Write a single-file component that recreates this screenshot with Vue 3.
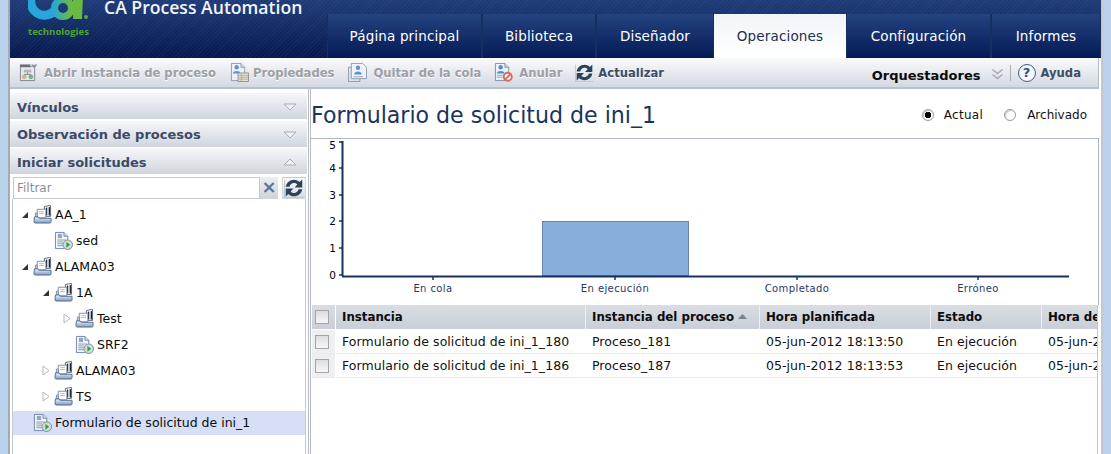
<script setup>
const tabs = [
  { label: 'Página principal', w: 155 },
  { label: 'Biblioteca', w: 114 },
  { label: 'Diseñador', w: 118 },
  { label: 'Operaciones', w: 132, active: true },
  { label: 'Configuración', w: 145 },
  { label: 'Informes', w: 110 },
]
const tools = [
  { label: 'Abrir instancia de proceso', icon: 'i-open', gap: 14, inner: 6 },
  { label: 'Propiedades', icon: 'i-prop', gap: 14, inner: 4 },
  { label: 'Quitar de la cola', icon: 'i-queue', gap: 13, inner: 6 },
  { label: 'Anular', icon: 'i-cancel', gap: 13, inner: 6 },
  { label: 'Actualizar', icon: 'i-refresh', on: true, gap: 0, inner: 4 },
]
const tree = [
  { label: 'AA_1', level: 0, arrow: 'open', icon: 'i-srv' },
  { label: 'sed', level: 1, icon: 'i-form' },
  { label: 'ALAMA03', level: 0, arrow: 'open', icon: 'i-srv' },
  { label: '1A', level: 1, arrow: 'open', icon: 'i-srv' },
  { label: 'Test', level: 2, arrow: 'closed', icon: 'i-srv' },
  { label: 'SRF2', level: 2, icon: 'i-form' },
  { label: 'ALAMA03', level: 1, arrow: 'closed', icon: 'i-srv' },
  { label: 'TS', level: 1, arrow: 'closed', icon: 'i-srv' },
  { label: 'Formulario de solicitud de ini_1', level: 0, icon: 'i-form', sel: true },
]
const yTicks = [
  { n: 5, y: 3, ly: 10 }, { n: 4, y: 29, ly: 33 }, { n: 3, y: 56, ly: 60 }, { n: 2, y: 82, ly: 86 }, { n: 1, y: 109, ly: 113 }, { n: 0, y: 136, ly: 140 },
]
const xTicks = [
  { t: 'En cola', x: 122 }, { t: 'En ejecución', x: 304 }, { t: 'Completado', x: 486 }, { t: 'Erróneo', x: 667 },
]
const rows = [
  ['Formulario de solicitud de ini_1_180', 'Proceso_181', '05-jun-2012 18:13:50', 'En ejecución', '05-jun-2012 18:13:50'],
  ['Formulario de solicitud de ini_1_186', 'Proceso_187', '05-jun-2012 18:13:53', 'En ejecución', '05-jun-2012 18:13:53'],
]
</script>

<template>
  <div class="frame">
    <svg class="sprite" width="0" height="0" aria-hidden="true">
      <defs>
        <linearGradient id="g-srv" x1="0" y1="0" x2="0" y2="1">
          <stop offset="0" stop-color="#eef3f9" /><stop offset="1" stop-color="#7f99bc" />
        </linearGradient>
        <linearGradient id="g-logo" x1="0" y1="0" x2="1" y2="0">
          <stop offset="0" stop-color="#2aa8cf" /><stop offset="0.5" stop-color="#4cb47a" /><stop offset="1" stop-color="#6dbb3f" />
        </linearGradient>
      </defs>
      <symbol id="i-srv" viewBox="0 0 20 20">
        <path d="M12 1.500l6.500-1v11.500H12z" fill="#fff" stroke="#59677c" />
        <path d="M13.500 3l1.500-.3V11h-1.500zM16.500 2.400l1.500-.3V11h-1.500z" fill="#1d2633" />
        <path d="M4.500 4.500h9v9h-9z" fill="#fff" stroke="#7d8fa8" />
        <path d="M6.500 7h5M6.500 9h5" stroke="#a9b8cb" />
        <path d="M2.500 8.500v4.500h2v-4.500z" fill="#cbd7e6" stroke="#7d8fa8" />
        <path d="M1.500 12.500h4l1 1.500h12.500v3.500a1.500 1.500 0 0 1-1.500 1.500H2.500a1.500 1.500 0 0 1-1.500-1.500z" fill="url(#g-srv)" stroke="#4f6b93" />
      </symbol>
      <symbol id="i-form" viewBox="0 0 20 20">
        <path d="M1.500 1.500h9l4 4v13h-13z" fill="#f5f7fb" stroke="#6f86a8" />
        <path d="M10.500 1.500v4h4" fill="#d5dfec" stroke="#6f86a8" />
        <path d="M4 3h4.500v4.500H4z" fill="#8fa6c6" />
        <path d="M3.500 9.500h9M3.500 11.500h6M3.500 13.500h6M3.500 15.500h6" stroke="#8798ae" />
        <circle cx="14.500" cy="14.500" r="5" fill="#d3dade" stroke="#7f8c96" />
        <path d="M13 11.500l4 3-4 3z" fill="#23a637" />
      </symbol>
      <symbol id="i-open" viewBox="0 0 20 20">
        <path d="M1.500 3.500h15v15h-15z" fill="#e7e9ec" stroke="#6e747c" />
        <path d="M1 1.500h11v3H1z" fill="#555c65" />
        <path d="M13 1l3 1 3-1-1 3-3 1z" fill="#7f868f" />
        <path d="M5 7h8v3H5z" fill="#a9aeb5" />
        <circle cx="5.500" cy="14.500" r="2.500" fill="#c9b26a" /><circle cx="12.500" cy="14.500" r="2.500" fill="#62a583" />
        <path d="M9 10v2M5.500 12h7" stroke="#6e747c" />
      </symbol>
      <symbol id="i-prop" viewBox="0 0 20 20">
        <path d="M1.500 .5h10l4 4v14h-14z" fill="#eef2f8" stroke="#7d8fa9" />
        <path d="M11.500 .5v4h4" fill="#cfd9e6" stroke="#7d8fa9" />
        <circle cx="7" cy="4.500" r="2.300" fill="#3f86d8" /><path d="M3 11c0-3.500 8-3.500 8 0z" fill="#3f86d8" />
        <path d="M8.500 10.500h11v9h-11z" fill="#e8e3cf" stroke="#85857a" />
        <path d="M9 13h10M9 15h10M9 17h10M12 11v8" stroke="#a09e8d" stroke-width=".8" />
      </symbol>
      <symbol id="i-queue" viewBox="0 0 20 20">
        <path d="M.5 4.500h12v15H.5z" fill="#d8e2ee" stroke="#7d8fa9" />
        <path d="M3.500 .5h12l4 4v12h-16z" fill="#f1f4f9" stroke="#7d8fa9" />
        <circle cx="10.500" cy="5" r="2.300" fill="#3f86d8" /><path d="M6.500 12c0-4 8-4 8 0z" fill="#3f86d8" />
        <path d="M6 14.500h10" stroke="#8c9cb0" />
      </symbol>
      <symbol id="i-cancel" viewBox="0 0 20 20">
        <path d="M1.500 .5h10l4 4v14h-14z" fill="#eef2f8" stroke="#6f829d" />
        <path d="M11.500 .5v4h4" fill="#cfd9e6" stroke="#6f829d" />
        <circle cx="7" cy="4.500" r="2.300" fill="#2f7cd6" /><path d="M3 11c0-3.500 8-3.500 8 0z" fill="#2f7cd6" />
        <path d="M3 13h6M3 15h6" stroke="#8c9cb0" />
        <circle cx="14.500" cy="14.500" r="4.200" fill="#fff" stroke="#d8543c" stroke-width="2" />
        <path d="M11.700 17.300l5.600-5.600" stroke="#d8543c" stroke-width="2" />
      </symbol>
      <symbol id="i-refresh" viewBox="1.500 1.500 17 17">
        <path d="M2 3v15h16" fill="none" stroke="#b9bec6" stroke-width=".7" />
        <path d="M3 9c.5-3.500 3.500-6 7-6 2 0 3.600.8 4.800 2L17 2.800V9.500h-6.500l2.300-2.400C12 6.200 11 5.800 10 5.800 8.200 5.800 6.500 7.200 6.200 9z" fill="#2c435c" />
        <path d="M17 11c-.5 3.500-3.500 6-7 6-2 0-3.600-.8-4.800-2L3 17.200V10.500h6.500l-2.300 2.400c.8.900 1.800 1.300 2.800 1.300 1.800 0 3.500-1.400 3.800-3.200z" fill="#2c435c" />
      </symbol>
    </svg>

    <div class="app">
      <header class="header">
        <div class="brand">
          <div class="logo">
            <svg class="logo-mark" width="62" height="22" viewBox="0 0 62 22">
              <path d="M5 -6A13 13 0 0 0 28 9" fill="none" stroke="#27a5dc" stroke-width="9" />
              <circle cx="35" cy="8" r="8.500" fill="none" stroke="url(#g-logo)" stroke-width="7" />
              <path d="M45 -4h10l-1 23H45z" fill="#68ba42" />
              <circle cx="58" cy="17" r="2" fill="#5fa63d" />
            </svg>
            <span class="logo-word">technologies</span>
          </div>
          <div class="product">CA Process Automation</div>
        </div>
        <nav class="tabs">
          <div v-for="t in tabs" :key="t.label" class="tab" :class="{ active: t.active }" :style="{ width: t.w + 'px' }">{{ t.label }}</div>
        </nav>
      </header>

      <div class="toolbar">
        <div v-for="t in tools" :key="t.label" class="tool" :class="{ on: t.on }" :style="{ marginRight: t.gap + 'px', gap: t.inner + 'px' }">
          <svg class="tool-ic" :class="{ dim: !t.on }" width="19" height="19"><use :href="'#' + t.icon" /></svg>
          <span>{{ t.label }}</span>
        </div>
        <div class="tb-right">
          <span class="orq">Orquestadores</span>
          <svg class="chev" width="13" height="13" viewBox="0 0 13 13">
            <path d="M1.500 1.500l5 4 5-4M1.500 6.500l5 4 5-4" fill="none" stroke="#a4a9b1" stroke-width="1.500" />
          </svg>
          <span class="sep"></span>
          <span class="help">?</span>
          <span class="ayuda">Ayuda</span>
        </div>
      </div>

      <div class="body">
        <aside class="side">
          <div class="acc"><span>Vínculos</span><svg width="14" height="8" viewBox="0 0 14 8"><path d="M1 1h12L7 7z" fill="#eef0f4" stroke="#a8adb6" /></svg></div>
          <div class="acc"><span>Observación de procesos</span><svg width="14" height="8" viewBox="0 0 14 8"><path d="M1 1h12L7 7z" fill="#eef0f4" stroke="#a8adb6" /></svg></div>
          <div class="acc"><span>Iniciar solicitudes</span><svg width="14" height="8" viewBox="0 0 14 8"><path d="M1 7h12L7 1z" fill="#eef0f4" stroke="#a8adb6" /></svg></div>
          <div class="tree-pane">
            <div class="filter">
              <div class="f-input">Filtrar</div>
              <div class="f-clear">×</div>
              <div class="f-refresh"><svg width="20" height="20"><use href="#i-refresh" /></svg></div>
            </div>
            <div class="tree">
              <div v-for="(n, i) in tree" :key="i" class="node" :class="{ sel: n.sel }" :style="{ paddingLeft: 7 + n.level * 21 + 'px' }">
                <span class="arrow">
                  <svg v-if="n.arrow === 'open'" width="8" height="8" viewBox="0 0 8 8"><path d="M7 1v6H1z" fill="#333" /></svg>
                  <svg v-else-if="n.arrow === 'closed'" width="8" height="11" viewBox="0 0 8 11"><path d="M1 1l6 4.500-6 4.500z" fill="#fff" stroke="#b4b8be" /></svg>
                </span>
                <svg class="node-ic" width="19" height="19"><use :href="'#' + n.icon" /></svg>
                <span class="node-t">{{ n.label }}</span>
              </div>
            </div>
          </div>
        </aside>

        <main class="main">
          <div class="title-row">
            <h1>Formulario de solicitud de ini_1</h1>
            <label class="radio r1"><span class="dot checked"></span>Actual</label>
            <label class="radio r2"><span class="dot"></span>Archivado</label>
          </div>
          <div class="chart">
            <svg width="787" height="166" viewBox="0 0 787 166">
              <rect x="231.500" y="82.500" width="146" height="54" fill="#86afdb" stroke="#6b84ab" />
              <path d="M31.500 2v135M31 137.500h727" fill="none" stroke="#17305f" stroke-width="2" />
              <g v-for="t in yTicks" :key="t.n">
                <path :d="`M28 ${t.y}h3`" stroke="#17305f" stroke-width="1.500" />
                <text class="ya" x="25" :y="t.ly" text-anchor="end">{{ t.n }}</text>
              </g>
              <g v-for="t in xTicks" :key="t.t">
                <path :d="`M${t.x} 138v3`" stroke="#17305f" stroke-width="1.500" />
                <text class="xa" :x="t.x" y="153" text-anchor="middle">{{ t.t }}</text>
              </g>
            </svg>
          </div>
          <div class="table-wrap">
            <table>
              <colgroup><col class="c0" /><col class="c1" /><col class="c2" /><col class="c3" /><col class="c4" /><col class="c5" /></colgroup>
              <thead>
                <tr>
                  <th class="chk"><span class="box"></span></th>
                  <th>Instancia</th>
                  <th>Instancia del proceso<svg class="sort" width="9" height="5" viewBox="0 0 9 5"><path d="M4.500 0L9 5H0z" fill="#7c818a" /></svg></th>
                  <th>Hora planificada</th>
                  <th>Estado</th>
                  <th>Hora de inicio</th>
                </tr>
              </thead>
              <tbody>
                <tr v-for="(r, i) in rows" :key="i">
                  <td class="chk"><span class="box"></span></td>
                  <td v-for="(c, j) in r" :key="j">{{ c }}</td>
                </tr>
              </tbody>
            </table>
          </div>
        </main>
      </div>
    </div>
  </div>
</template>

<style scoped>
.frame {
  width: 1111px;
  height: 454px;
  overflow: hidden;
  box-sizing: border-box;
  background: #b9d1ea;
  padding: 0 8px 0 8px;
  font-family: "DejaVu Sans", Verdana, sans-serif;
  font-size: 12.500px;
  color: #111;
}
.sprite { position: absolute; }
.app {
  box-sizing: border-box;
  width: 1095px;
  height: 454px;
  background: #fff;
  border-left: 2px solid #a4aab4;
  border-right: 2px solid #c2c7d0;
  display: flex;
  flex-direction: column;
  overflow: hidden;
}
.header {
  flex: none;
  height: 58px;
  width: 1093px;
  display: flex;
  background:
    repeating-linear-gradient(135deg, rgba(255,255,255,.035) 0 1px, transparent 1px 3px),
    linear-gradient(#1f3c78, #06194f);
}
.brand { width: 317px; display: flex; flex: none; }
.logo { width: 94px; padding-left: 18px; box-sizing: border-box; flex: none; }
.logo-mark { display: block; }
.logo-word {
  display: block;
  font: 700 9.600px/11px "Open Sans", sans-serif;
  color: #4fa331;
  margin-top: 4px;
}
.product {
  font: 600 17.600px/22px "Open Sans", sans-serif;
  color: #f2f4f8;
  margin-top: -4px;
  white-space: nowrap;
}
.tabs { display: flex; align-items: flex-end; }
.tab {
  box-sizing: border-box;
  height: 44px;
  line-height: 44px;
  text-align: center;
  color: #fff;
  font-size: 13.500px;
  letter-spacing: .15px;
  background: linear-gradient(#24437f, #041a56);
  border-left: 1px solid #15305f;
  border-right: 1px solid #15305f;
  flex: none;
}
.tab.active { background: linear-gradient(#f1f4f9, #fff); color: #1c2f52; border: 0; }
.toolbar {
  flex: none;
  box-sizing: border-box;
  width: 1089px;
  height: 31px;
  padding-left: 9px;
  display: flex;
  align-items: center;
  background: linear-gradient(#fafbfc, #d4d8e1);
  border-bottom: 2px solid #b4c0d4;
  border-right: 1px solid #b4bcc8;
}
.tool {
  display: flex;
  align-items: center;
  font-weight: 700;
  font-size: 11.600px;
  color: #9c9fa4;
  text-shadow: 0 1px 0 #fff;
  white-space: nowrap;
}
.tool.on { color: #3b4d6b; }
.tool-ic.dim { opacity: .85; }
.tb-right { margin-left: auto; display: flex; align-items: center; padding-right: 17px; }
.orq { font-weight: 700; font-size: 13px; color: #0b0b0b; margin-top: 6px; }
.chev { margin: 3px 0 0 10px; }
.sep { width: 1px; height: 16px; background: #a9aeb6; margin: 0 7px 0 6px; }
.help {
  box-sizing: border-box;
  width: 18px; height: 18px;
  border-radius: 50%;
  border: 1.500px solid #3d5d90;
  background: #f5f7fb;
  color: #2f4f86;
  font-weight: 700;
  font-size: 13px;
  line-height: 15px;
  text-align: center;
}
.ayuda { margin-left: 5px; font-weight: 700; font-size: 11.600px; color: #3d4c68; }
.body { flex: 1; display: flex; min-height: 0; }
.side {
  flex: none;
  width: 299px;
  box-sizing: border-box;
  padding-top: 4px;
  border-right: 1px solid #b4bbc7;
  display: flex;
  flex-direction: column;
}
.acc {
  flex: none;
  height: 26px;
  margin-bottom: 1.500px;
  box-sizing: border-box;
  padding: 2px 10px 0 7px;
  display: flex;
  align-items: center;
  justify-content: space-between;
  background: linear-gradient(#f6f7f9, #d0d5de);
  font-weight: 700;
  font-size: 13px;
  color: #3b4a68;
  width: 297px;
}
.tree-pane { flex: 1; box-sizing: border-box; width: 296px; padding: 1px 0 0 3px; }
.filter { display: flex; height: 22px; }
.f-input {
  box-sizing: border-box;
  width: 247px;
  border: 1px solid #c4c9d2;
  background: #fff;
  padding-left: 3px;
  line-height: 20px;
  font-size: 12px;
  color: #8b8f95;
}
.f-clear {
  width: 18px;
  background: linear-gradient(#eceef1, #cfd3d9);
  color: #4a78a8;
  font: 700 18px/20px "DejaVu Sans", sans-serif;
  text-align: center;
}
.f-refresh {
  box-sizing: border-box;
  width: 24px;
  margin-left: 4px;
  border: 1px solid #d5d9df;
  border-top-color: #b8cbe2;
  background: linear-gradient(#f8f9fb, #d9dce2);
  display: flex;
  align-items: center;
  justify-content: center;
}
.tree {
  box-sizing: border-box;
  height: 260px;
  padding-top: 3px;
  margin-left: -1px;
  border-left: 1px solid #c4c9d2;
  border-right: 1px solid #c4c9d2;
}
.node {
  height: 26px;
  display: flex;
  align-items: center;
  box-sizing: border-box;
  color: #0c0c0c;
}
.node.sel { background: #d6dff5; height: 24px; margin-top: 1px; }
.arrow { width: 13px; padding-left: 1px; box-sizing: border-box; flex: none; display: flex; align-items: center; justify-content: flex-start; }
.node-ic { flex: none; }
.node-t { margin-left: 3px; white-space: nowrap; }
.main { flex: 1; min-width: 0; margin-left: 1px; border-left: 1px solid #b4bbc7; display: flex; flex-direction: column; }
.title-row { flex: none; height: 49px; box-sizing: border-box; padding-top: 3px; display: flex; align-items: center; }
h1 { margin: 0; font-weight: 400; font-size: 22.100px; color: #1a3263; white-space: nowrap; flex: 1; }
.radio { display: flex; align-items: center; font-size: 12px; color: #111; }
.r1 { gap: 10px; letter-spacing: .3px; margin-right: 21px; }
.r2 { gap: 11px; margin-right: 14px; }
.dot {
  box-sizing: border-box;
  width: 12px; height: 12px;
  border-radius: 50%;
  background: #fff;
  border: 1px solid #9c9c9c;
  box-shadow: inset 1px 1px 1px #c8c8c8;
}
.dot.checked { background: radial-gradient(circle, #000 0 3px, #fff 3.500px); }
.chart {
  flex: none;
  box-sizing: border-box;
  height: 167px;
  width: 788px;
  border-top: 1px solid #b0b8c8;
  border-right: 1px solid #b0b8c8;
}
.chart svg { display: block; }
.ya { font: 400 10.500px "DejaVu Sans", sans-serif; fill: #000; }
.xa { font: 10px "DejaVu Sans", sans-serif; letter-spacing: .4px; fill: #26396a; }
.table-wrap { width: 787px; overflow: hidden; padding-left: 1px; box-sizing: border-box; flex: 1; border-right: 1px solid #c2c7d0; }
table { border-collapse: separate; border-spacing: 0; table-layout: fixed; width: 900px; }
.c0 { width: 24px; } .c1 { width: 250px; } .c2 { width: 174px; } .c3 { width: 171px; } .c4 { width: 111px; } .c5 { width: 170px; }
th {
  height: 24px;
  padding: 0 0 0 6px;
  text-align: left;
  font-weight: 700;
  font-size: 11.800px;
  color: #0c0c0c;
  white-space: nowrap;
  background: linear-gradient(#d9dde3, #c9ced8);
  border-right: 1px solid #eef0f3;
  border-bottom: 1px solid #fff;
}
td {
  height: 24px;
  box-sizing: border-box;
  padding: 0 0 0 6px;
  white-space: nowrap;
  overflow: hidden;
  letter-spacing: .05px;
  border-bottom: 1px solid #e9e9e9;
  color: #111;
}
th.chk, td.chk { padding: 0 0 0 3px; border-right: 1px solid #fff; }
td.chk { background: #eeeff1; }
.box {
  display: block;
  box-sizing: border-box;
  width: 14px; height: 14px;
  border: 1px solid #a2a4a8;
  background: linear-gradient(#dcdde0, #f7f7f8);
}
.sort { margin-left: 4px; vertical-align: 2px; }
</style>
